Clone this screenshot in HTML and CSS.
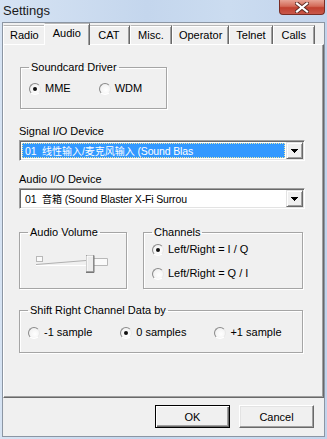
FILE: index.html
```html
<!DOCTYPE html>
<html lang="en">
<head>
    <meta charset="UTF-8">
    <title>Settings</title>
    <link rel="stylesheet" href="styles.css">
</head>
<body>
    <div class="window">
        <div class="titlebar">
            <span class="title">Settings</span>
            <div class="close">
                <svg width="14" height="11" viewBox="0 0 14 11">
                    <path d="M2 1.5L12 9.5M12 1.5L2 9.5" stroke="#5a2a24" stroke-width="4" stroke-linecap="square"/>
                    <path d="M2 1.5L12 9.5M12 1.5L2 9.5" stroke="#fff" stroke-width="2.2" stroke-linecap="square"/>
                </svg>
            </div>
        </div>

        <div class="client">
            <div class="tabs">
                <div class="tab">Radio</div>
                <div class="tab active">Audio</div>
                <div class="tab">CAT</div>
                <div class="tab">Misc.</div>
                <div class="tab">Operator</div>
                <div class="tab">Telnet</div>
                <div class="tab">Calls</div>
            </div>

            <div class="page">
                <fieldset class="group driver">
                    <legend>Soundcard Driver</legend>
                    <div class="radios">
                        <div class="radio"><span class="dot on"></span>MME</div>
                        <div class="radio"><span class="dot"></span>WDM</div>
                    </div>
                </fieldset>

                <div class="field-label first">Signal I/O Device</div>
                <div class="combo">
                    <div class="combo-text selected">01  <span class="cjk">线性输入/麦克风输入</span> (Sound Blas</div>
                    <div class="combo-btn">
                        <svg width="7" height="4" viewBox="0 0 7 4"><path d="M0 0h7v1H0zM1 1h5v1H1zM2 2h3v1H2zM3 3h1v1H3z" fill="#000"/></svg>
                    </div>
                </div>

                <div class="field-label">Audio I/O Device</div>
                <div class="combo">
                    <div class="combo-text">01  <span class="cjk">音箱</span> (Sound Blaster X-Fi Surrou</div>
                    <div class="combo-btn">
                        <svg width="7" height="4" viewBox="0 0 7 4"><path d="M0 0h7v1H0zM1 1h5v1H1zM2 2h3v1H2zM3 3h1v1H3z" fill="#000"/></svg>
                    </div>
                </div>

                <div class="pair">
                    <fieldset class="group volume">
                        <legend>Audio Volume</legend>
                        <svg class="slider" width="72" height="18" viewBox="0 0 72 18">
                            <rect x="0.5" y="1.5" width="6" height="5" fill="#fafafa" stroke="#b8b8b8"/>
                            <path d="M0 9.5L50 5.5" stroke="#b0b0b0" fill="none"/>
                            <path d="M0 10.5H50" stroke="#fff" fill="none"/>
                            <path d="M57 3.5H71.5V10.5H57" stroke="#b8b8b8" fill="#fafafa"/>
                            <rect x="50.5" y="0.5" width="7" height="16" fill="#ececec" stroke="#a0a0a0"/>
                            <path d="M51 16V1h6" stroke="#fff" fill="none"/>
                            <path d="M58 0.5V17.5H50" stroke="#777" fill="none"/>
                        </svg>
                    </fieldset>

                    <fieldset class="group channels">
                        <legend>Channels</legend>
                        <div class="radio-list">
                            <div class="radio"><span class="dot on"></span>Left/Right = I / Q</div>
                            <div class="radio"><span class="dot"></span>Left/Right = Q / I</div>
                        </div>
                    </fieldset>
                </div>

                <fieldset class="group shift">
                    <legend>Shift Right Channel Data by</legend>
                    <div class="radios">
                        <div class="radio"><span class="dot"></span>-1 sample</div>
                        <div class="radio"><span class="dot on"></span>0 samples</div>
                        <div class="radio"><span class="dot"></span>+1 sample</div>
                    </div>
                </fieldset>
            </div>

            <div class="buttons">
                <button class="btn default">OK</button>
                <button class="btn">Cancel</button>
            </div>
        </div>
    </div>
</body>
</html>
```

FILE: styles.css
```css
/* window frame */
body {
    margin: 0;
    padding: 0;
    font-family: "Liberation Sans", Arial, "Noto Sans CJK SC", sans-serif;
    font-size: 11px;
    color: #000;
    background-color: #c9d9ee;
}

.window {
    width: 327px;
    height: 439px;
    box-sizing: border-box;
    padding: 0 2px 2px 2px;
    background: linear-gradient(90deg, #d6e3f3 0%, #c4d6ed 45%, #cbdcf0 70%, #c2d4ec 100%);
}

.titlebar {
    height: 22px;
    display: flex;
    justify-content: space-between;
    align-items: flex-start;
}

.title {
    font-size: 13px;
    line-height: 22px;
    padding-left: 1px;
    color: #1a1a1a;
}

.close {
    width: 46px;
    height: 15px;
    box-sizing: border-box;
    border: 1px solid #7a2d24;
    border-top: none;
    border-radius: 0 0 4px 4px;
    background: linear-gradient(#e7a395 0%, #d36a58 45%, #c0402f 55%, #c9584a 100%);
    display: flex;
    justify-content: center;
    align-items: center;
}

.client {
    height: 415px;
    box-sizing: border-box;
    border: 1px solid #8c96a3;
    background-color: #f0f0f0;
    display: flex;
    flex-direction: column;
}

/* tabs */
.tabs {
    display: flex;
    align-items: flex-end;
    padding-top: 2px;
    height: 21px;
    box-sizing: border-box;
}

.tab {
    height: 19px;
    min-width: 42px;
    box-sizing: border-box;
    padding: 0 6px;
    line-height: 18px;
    text-align: center;
    border-top: 1px solid #b8b8b8;
    border-left: 1px solid #fff;
    border-right: 1px solid #696969;
    box-shadow: inset 0 1px 0 #fff, inset -1px 0 0 #a0a0a0;
    background-color: #f0f0f0;
}

.tab.active {
    position: relative;
    z-index: 1;
    height: 22px;
    margin: 0 -2px -1px -2px;
    padding: 0 8px;
    min-width: 46px;
    line-height: 18px;
}

.page {
    height: 354px;
    box-sizing: border-box;
    border-top: 1px solid #fff;
    border-left: 1px solid #fff;
    border-right: 1px solid #696969;
    border-bottom: 1px solid #696969;
    box-shadow: inset -1px -1px 0 #a0a0a0;
    padding: 0 0 0 15px;
    display: flex;
    flex-direction: column;
    align-items: flex-start;
}

/* group boxes */
.group {
    margin: 0;
    padding: 0 8px;
    min-width: 0;
    box-sizing: border-box;
    border: 1px solid #a5a5a5;
    box-shadow: 1px 1px 0 #fff, inset 1px 1px 0 #fff;
}

.group legend {
    padding: 0 2px;
    line-height: 13px;
}

.driver {
    width: 147px;
    height: 48px;
    margin: 16px 0 0 1px;
}

.driver .radios {
    margin-top: 8px;
}

.radios {
    display: flex;
    gap: 28px;
}

.radio-list {
    display: flex;
    flex-direction: column;
    gap: 11px;
    margin-top: 4px;
}

.radio {
    display: flex;
    align-items: center;
    gap: 4px;
    line-height: 13px;
}

.dot {
    width: 12px;
    height: 12px;
    box-sizing: border-box;
    border-radius: 50%;
    border: 1px solid;
    border-color: #8a8a8a #e8e8e8 #fff #8a8a8a;
    background: radial-gradient(circle at 60% 60%, #fff 0%, #f4f4f4 60%, #dcdcdc 100%);
    display: flex;
    justify-content: center;
    align-items: center;
}

.dot.on::after {
    content: "";
    width: 4px;
    height: 4px;
    border-radius: 50%;
    background-color: #111;
}

/* combo boxes */
.field-label {
    line-height: 13px;
    margin: 12px 0 2px 0;
}

.field-label.first {
    margin-top: 16px;
}

.combo {
    width: 286px;
    height: 21px;
    box-sizing: border-box;
    display: flex;
    padding: 1px;
    border: 1px solid;
    border-color: #a0a0a0 #fff #fff #a0a0a0;
    box-shadow: inset 1px 1px 0 #696969, inset -1px -1px 0 #e3e3e3;
    background-color: #fff;
}

.combo-text {
    flex: 1;
    margin: 1px 0 1px 1px;
    padding-left: 2px;
    font-size: 10.5px;
    letter-spacing: -0.15px;
    line-height: 15px;
    white-space: pre;
    overflow: hidden;
    border: 1px solid transparent;
}

.combo-text .cjk {
    font-size: 10px;
    letter-spacing: 0;
}

.combo-text.selected {
    background-color: #3399ff;
    color: #fff;
    border: 1px dotted #f0e8a0;
}

.combo-btn {
    width: 17px;
    height: 17px;
    margin-left: 1px;
    box-sizing: border-box;
    border: 1px solid;
    border-color: #e3e3e3 #696969 #696969 #e3e3e3;
    box-shadow: inset 1px 1px 0 #fff, inset -1px -1px 0 #a0a0a0;
    background-color: #f0f0f0;
    display: flex;
    justify-content: center;
    align-items: center;
}

/* volume + channels */
.pair {
    display: flex;
    gap: 16px;
    margin-top: 17px;
}

.volume {
    width: 108px;
    height: 63px;
}

.slider {
    display: block;
    margin: 16px 0 0 8px;
}

.channels {
    width: 160px;
    height: 63px;
}

.shift {
    width: 284px;
    height: 49px;
    margin-top: 15px;
}

.shift .radios {
    margin-top: 9px;
}

/* dialog buttons */
.buttons {
    display: flex;
    justify-content: flex-end;
    gap: 9px;
    padding: 7px 10px 0 0;
}

.btn {
    width: 75px;
    height: 23px;
    box-sizing: border-box;
    font-family: inherit;
    font-size: 11px;
    color: #000;
    background-color: #f0f0f0;
    border: 1px solid;
    border-color: #fff #696969 #696969 #fff;
    box-shadow: inset -1px -1px 0 #a0a0a0, inset 1px 1px 0 #e3e3e3;
    padding: 0;
}

.btn.default {
    border-color: #000;
    box-shadow: inset 1px 1px 0 #fff, inset -1px -1px 0 #696969, inset -2px -2px 0 #a0a0a0;
}
```
